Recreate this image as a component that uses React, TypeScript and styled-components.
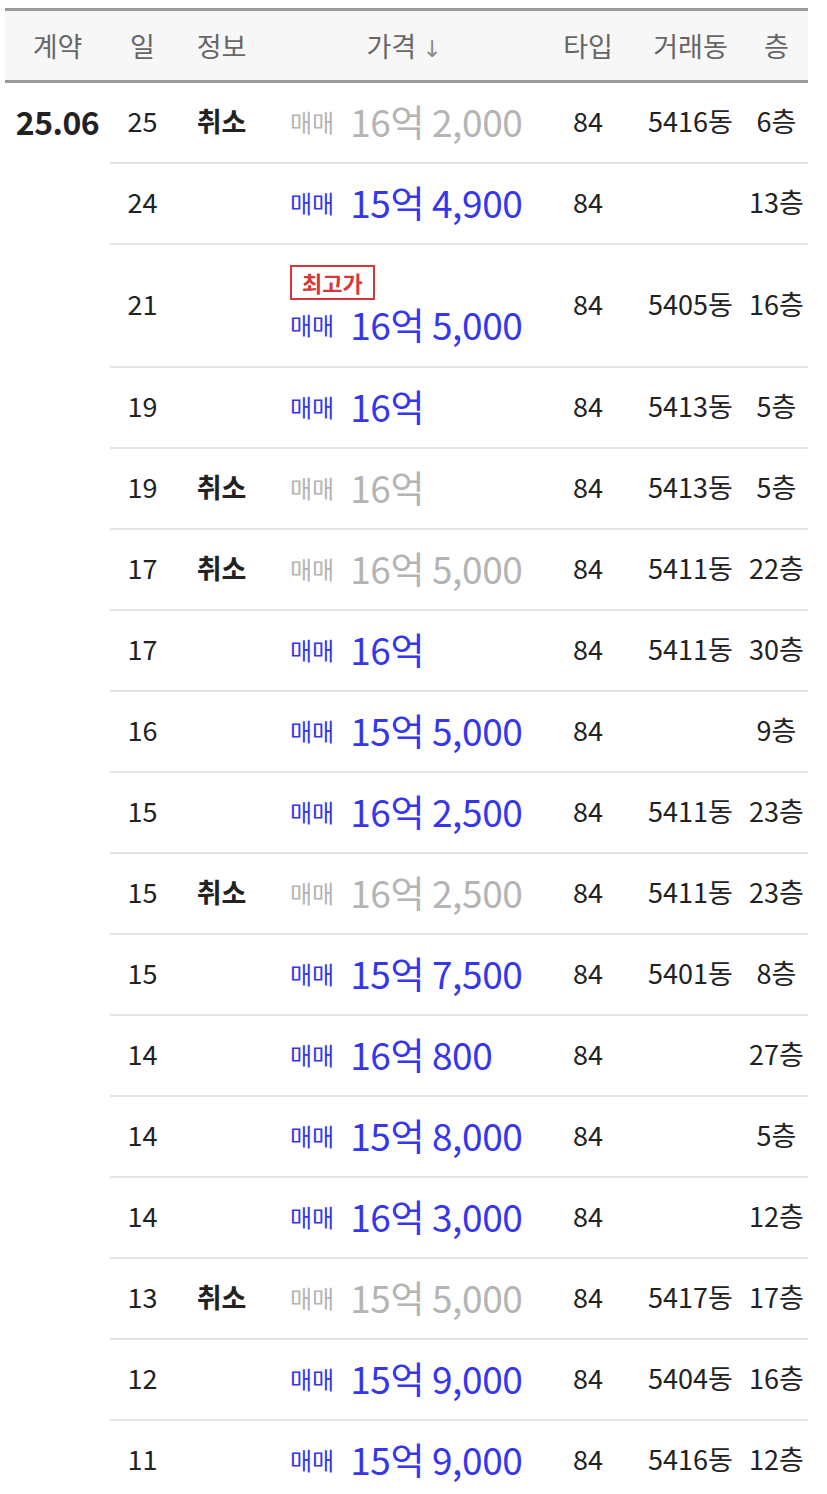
import { FC } from "react";
import styled, { createGlobalStyle } from "styled-components";

const Colors = {
  text: "#222222",
  head: "#666666",
  headBg: "#f7f7f7",
  rule: "#9a9a9a",
  line: "#e4e4e4",
  blue: "#3636ec",
  muted: "#b4b4b4",
  red: "#d8373a",
};

const GlobalStyle = createGlobalStyle`
  html, body {
    margin: 0;
    padding: 0;
    background: #ffffff;
    font-family: "Noto Sans CJK KR", "Noto Sans", sans-serif;
  }
`;

const SPage = styled.div`
  padding: 8px 0 0 5px;
`;

const STable = styled.table`
  width: 803px;
  border-collapse: collapse;
  table-layout: fixed;
`;

const SHead = styled.th<{ w: number }>`
  width: ${(p) => p.w}px;
  height: 69px;
  padding: 0;
  background: ${Colors.headBg};
  border-top: 3px solid ${Colors.rule};
  border-bottom: 3px solid ${Colors.rule};
  color: ${Colors.head};
  font-size: 27px;
  font-weight: 400;
  text-align: center;
`;

const SArrow = styled.span`
  margin-left: 6px;
  font-family: "DejaVu Sans", sans-serif;
  font-size: 23px;
  color: #8a8a8a;
`;

const SMonthCell = styled.td`
  padding: 0;
  vertical-align: top;
  border: none;
`;

const SMonth = styled.div`
  height: 75px;
  padding-bottom: 4px;
  display: flex;
  align-items: center;
  justify-content: center;
  font-size: 32px;
  font-weight: 600;
  color: ${Colors.text};
  letter-spacing: -0.5px;
`;

const SCell = styled.td<{ align?: string; tall?: boolean }>`
  height: ${(p) => (p.tall ? 117 : 75)}px;
  padding: 0 0 4px;
  border-bottom: 2px solid ${Colors.line};
  text-align: ${(p) => p.align || "center"};
  vertical-align: middle;
  font-size: 27px;
  color: ${Colors.text};
  white-space: nowrap;
`;

const SInfo = styled.span`
  font-weight: 700;
`;

const SPriceCell = styled(SCell)`
  padding-left: 22px;
`;

const SBadge = styled.span`
  display: inline-block;
  box-sizing: border-box;
  height: 35px;
  margin-top: 6px;
  padding: 0 10px;
  border: 2px solid ${Colors.red};
  color: ${Colors.red};
  font-size: 22px;
  font-weight: 700;
  line-height: 30px;
`;

const SPrice = styled.div<{ cancelled: boolean }>`
  display: flex;
  align-items: center;
  color: ${(p) => (p.cancelled ? Colors.muted : Colors.blue)};
  line-height: 46px;
`;

const SKind = styled.span`
  font-size: 24px;
  margin-right: 16px;
  padding-top: 2px;
`;

const SAmount = styled.span`
  font-size: 37px;
  letter-spacing: -0.4px;
`;

interface Deal {
  day: string;
  cancelled?: boolean;
  price: string;
  top?: boolean;
  dong?: string;
  floor: string;
}

const deals: Deal[] = [
  { day: "25", cancelled: true, price: "16억 2,000", dong: "5416동", floor: "6층" },
  { day: "24", price: "15억 4,900", floor: "13층" },
  { day: "21", price: "16억 5,000", top: true, dong: "5405동", floor: "16층" },
  { day: "19", price: "16억", dong: "5413동", floor: "5층" },
  { day: "19", cancelled: true, price: "16억", dong: "5413동", floor: "5층" },
  { day: "17", cancelled: true, price: "16억 5,000", dong: "5411동", floor: "22층" },
  { day: "17", price: "16억", dong: "5411동", floor: "30층" },
  { day: "16", price: "15억 5,000", floor: "9층" },
  { day: "15", price: "16억 2,500", dong: "5411동", floor: "23층" },
  { day: "15", cancelled: true, price: "16억 2,500", dong: "5411동", floor: "23층" },
  { day: "15", price: "15억 7,500", dong: "5401동", floor: "8층" },
  { day: "14", price: "16억 800", floor: "27층" },
  { day: "14", price: "15억 8,000", floor: "5층" },
  { day: "14", price: "16억 3,000", floor: "12층" },
  { day: "13", cancelled: true, price: "15억 5,000", dong: "5417동", floor: "17층" },
  { day: "12", price: "15억 9,000", dong: "5404동", floor: "16층" },
  { day: "11", price: "15억 9,000", dong: "5416동", floor: "12층" },
];

const columns = [
  { label: "계약", w: 105 },
  { label: "일", w: 65 },
  { label: "정보", w: 93 },
  { label: "가격", w: 272, sort: true },
  { label: "타입", w: 96 },
  { label: "거래동", w: 109 },
  { label: "층", w: 63 },
];

const DealRow: FC<{ deal: Deal; first: boolean }> = ({ deal, first }) => (
  <tr>
    {first && (
      <SMonthCell rowSpan={deals.length}>
        <SMonth>25.06</SMonth>
      </SMonthCell>
    )}
    <SCell tall={deal.top}>{deal.day}</SCell>
    <SCell tall={deal.top}>{deal.cancelled && <SInfo>취소</SInfo>}</SCell>
    <SPriceCell align="left" tall={deal.top}>
      {deal.top && <SBadge>최고가</SBadge>}
      <SPrice cancelled={!!deal.cancelled}>
        <SKind>매매</SKind>
        <SAmount>{deal.price}</SAmount>
      </SPrice>
    </SPriceCell>
    <SCell tall={deal.top}>84</SCell>
    <SCell tall={deal.top}>{deal.dong}</SCell>
    <SCell tall={deal.top}>{deal.floor}</SCell>
  </tr>
);

const App: FC = () => (
  <SPage>
    <GlobalStyle />
    <STable>
      <thead>
        <tr>
          {columns.map((c) => (
            <SHead key={c.label} w={c.w}>
              {c.label}
              {c.sort && <SArrow>↓</SArrow>}
            </SHead>
          ))}
        </tr>
      </thead>
      <tbody>
        {deals.map((d, i) => (
          <DealRow key={i} deal={d} first={i === 0} />
        ))}
      </tbody>
    </STable>
  </SPage>
);

export default App;
